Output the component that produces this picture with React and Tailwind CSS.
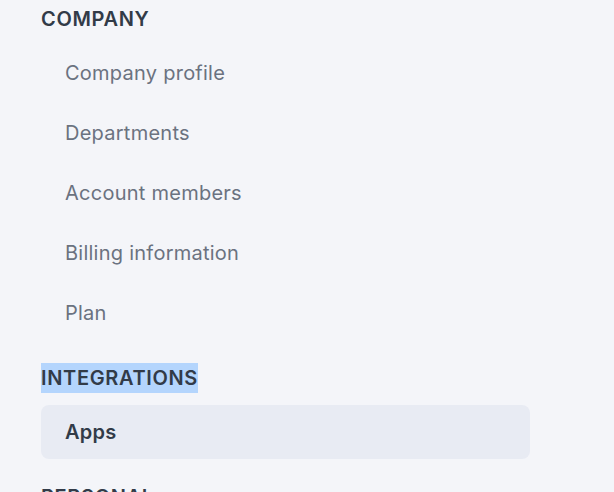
const sections = [
  {
    title: "Company",
    items: ["Company profile", "Departments", "Account members", "Billing information", "Plan"],
  },
  {
    title: "Integrations",
    selected: true,
    items: ["Apps"],
    active: "Apps",
  },
  {
    title: "Personal",
    items: ["Profile", "Notifications"],
  },
];

export default function App() {
  return (
    <div
      className="w-[614px] h-[492px] overflow-hidden bg-[#f4f5f9] pl-[41px] pt-1"
      style={{ fontFamily: "Inter, 'Noto Sans', sans-serif" }}
    >
      <nav className="flex flex-col gap-[23px] w-[489px]">
        {sections.map((section) => (
          <div key={section.title}>
            <h3 className="h-[30px] text-[20px] leading-[30px] font-semibold uppercase tracking-[0.65px] text-[#323b48] mb-3">
              <span className={section.selected ? "inline-block align-top h-[30px] bg-[#b4d5fd]" : "inline-block align-top h-[30px]"}>
                {section.title}
              </span>
            </h3>
            <ul className="flex flex-col gap-[6px]">
              {section.items.map((item) => (
                <li key={item}>
                  <a
                    href="#"
                    className={
                      item === section.active
                        ? "flex items-center h-[54px] px-6 rounded-lg bg-[#e8ebf3] text-[20px] tracking-[0.25px] font-semibold text-[#323b48]"
                        : "flex items-center h-[54px] px-6 rounded-lg text-[20px] tracking-[0.25px] text-[#6b7280]"
                    }
                  >
                    {item}
                  </a>
                </li>
              ))}
            </ul>
          </div>
        ))}
      </nav>
    </div>
  );
}
